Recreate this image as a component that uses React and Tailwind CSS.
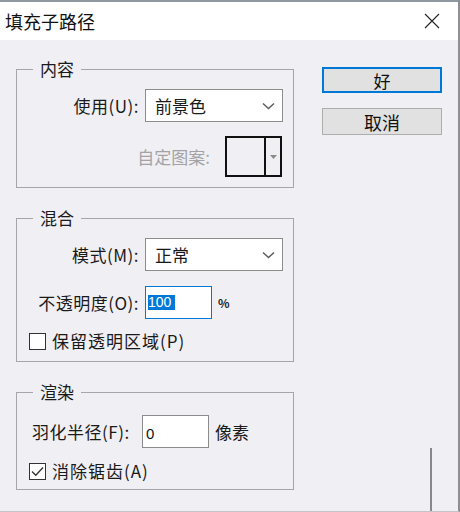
import React from 'react';

const Chevron = () => (
  <svg width="13" height="8" viewBox="0 0 13 8" className="mr-[7px]">
    <path d="M1 1.5 L6.5 6.5 L12 1.5" fill="none" stroke="#5a5a5a" strokeWidth="1.4" />
  </svg>
);

const Select = ({ value }) => (
  <div className="ml-[6px] w-[138px] h-[33px] bg-white border border-[#8c8c8c] flex items-center justify-between pl-[9px]">
    <span className="text-[17px] text-[#1a1a1a]">{value}</span>
    <Chevron />
  </div>
);

const Checkbox = ({ checked, label }) => (
  <div className="flex items-center pl-[12px] h-[18px]">
    <div className="w-[17px] h-[17px] border border-[#333] bg-white flex items-center justify-center">
      {checked && (
        <svg width="13" height="11" viewBox="0 0 13 11">
          <path d="M1 5.5 L4.8 9.3 L12 1.5" fill="none" stroke="#333" strokeWidth="1.3" />
        </svg>
      )}
    </div>
    <span className="ml-[6px] text-[17px] tracking-[1px] text-[#1a1a1a] leading-[18px]">{label}</span>
  </div>
);

const Group = ({ title, children, className }) => (
  <fieldset className={`border border-[#a5a5aa] min-w-0 ${className}`}>
    <legend className="ml-[16px] px-[7px] text-[17px] leading-[24px] text-[#1a1a1a]">{title}</legend>
    {children}
  </fieldset>
);

const Label = ({ children }) => (
  <span className="w-[122px] text-right text-[17px] tracking-[0.5px] text-[#1a1a1a]">{children}</span>
);

export default function App() {
  return (
    <div className="w-[460px] h-[512px] bg-[#f0eff4] flex flex-col overflow-hidden border-t-2 border-[#8f97a1] border-r-2 border-r-[#8e8e93] border-b border-b-[#c4c4c8] font-['Noto_Sans_CJK_SC',sans-serif]">
      <div className="h-[38px] bg-white flex items-center justify-between pl-[5px] pr-[18px]">
        <span className="text-[18px] text-[#111]">填充子路径</span>
        <svg width="16" height="16" viewBox="0 0 16 16">
          <path d="M1 1 L15 15 M15 1 L1 15" stroke="#222" strokeWidth="1.1" />
        </svg>
      </div>

      <div className="flex-1 flex pl-[16px]">
        <div className="w-[278px] pt-[17px]">
          <Group title="内容" className="pb-[10px]">
            <div className="mt-[8px] flex items-center">
              <Label>使用(U):</Label>
              <Select value="前景色" />
            </div>
            <div className="mt-[14px] h-[41px] flex items-center justify-end pr-[11px] gap-[15px]">
              <span className="text-[17px] text-[#a3a3a6]">自定图案:</span>
              <div className="w-[57px] h-[41px] border-2 border-[#111] flex">
                <div className="flex-1" />
                <div className="w-[16px] border-l-2 border-[#111] flex items-center justify-center">
                  <svg width="7" height="4" viewBox="0 0 7 4">
                    <path d="M0 0 L7 0 L3.5 4 Z" fill="#8a8a8a" />
                  </svg>
                </div>
              </div>
            </div>
          </Group>

          <Group title="混合" className="mt-[18px] pb-[11px]">
            <div className="mt-[8px] flex items-center">
              <Label>模式(M):</Label>
              <Select value="正常" />
            </div>
            <div className="mt-[15px] flex items-center">
              <Label>不透明度(O):</Label>
              <div className="ml-[6px] w-[67px] h-[33px] bg-white border border-[#0078d7] pl-[2px] pt-[1px]">
                <span className="inline-block bg-[#0078d7] text-white text-[14px] leading-[15px] pr-[4px] font-['Liberation_Sans',sans-serif]">100</span>
              </div>
              <span className="ml-[6px] text-[12px] font-bold text-[#222]">%</span>
            </div>
            <div className="mt-[13px]">
              <Checkbox label="保留透明区域(P)" />
            </div>
          </Group>

          <Group title="渲染" className="mt-[18px] pb-[9px]">
            <div className="mt-[11px] flex items-center pl-[15px]">
              <span className="w-[100px] text-[17px] tracking-[0.5px] text-[#1a1a1a] whitespace-nowrap">羽化半径(F):</span>
              <div className="ml-[10px] w-[67px] h-[33px] bg-white border border-[#8c8c8c] pl-[3px] pt-[4px]">
                <span className="text-[15px] leading-[18px] text-[#111] font-['Liberation_Sans',sans-serif]">0</span>
              </div>
              <span className="ml-[6px] text-[17px] text-[#1a1a1a]">像素</span>
            </div>
            <div className="mt-[14px]">
              <Checkbox checked label="消除锯齿(A)" />
            </div>
          </Group>
        </div>

        <div className="ml-[28px] w-[120px] pt-[27px] flex flex-col">
          <button className="h-[26px] border-2 border-[#0078d7] bg-[#e1e1e1] text-[17px] leading-none text-[#111]">好</button>
          <button className="mt-[15px] h-[27px] border border-[#adadad] bg-[#e1e1e1] text-[18px] leading-none text-[#111]">取消</button>
          <div className="mt-auto ml-[108px] w-[2px] h-[63px] bg-[#87878c]" />
        </div>
      </div>
    </div>
  );
}
